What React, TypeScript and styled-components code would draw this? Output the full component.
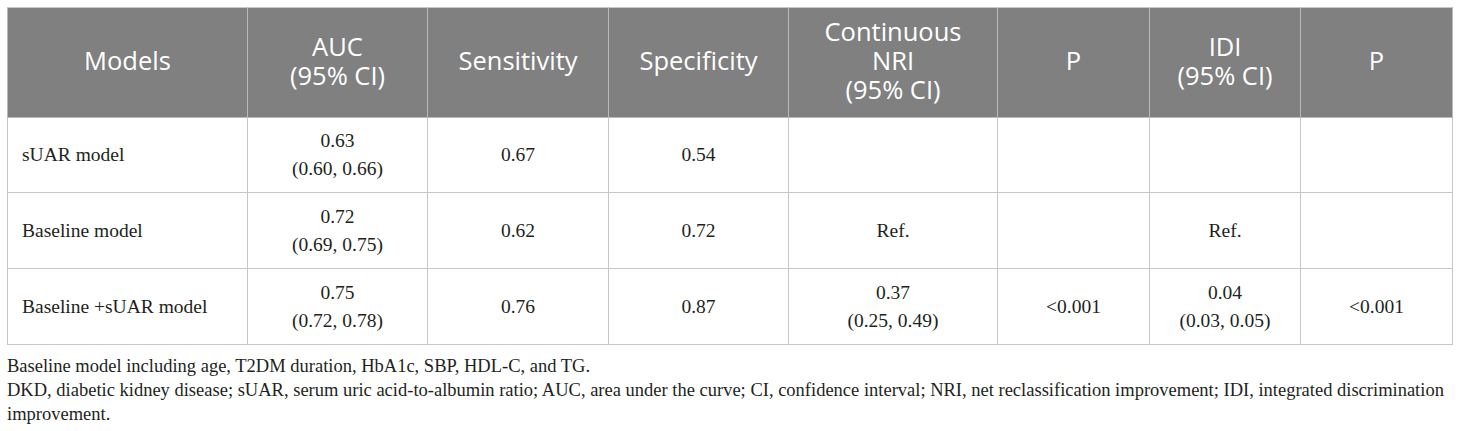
import React from "react";
import styled, { createGlobalStyle } from "styled-components";

const GlobalStyle = createGlobalStyle`
  body {
    margin: 0;
    background: #fff;
  }
`;

const columns = [240, 180, 181, 180, 209, 152, 151, 152];

const headers = [
  ["Models"],
  ["AUC", "(95% CI)"],
  ["Sensitivity"],
  ["Specificity"],
  ["Continuous", "NRI", "(95% CI)"],
  ["P"],
  ["IDI", "(95% CI)"],
  ["P"],
];

const rows: string[][][] = [
  [["sUAR model"], ["0.63", "(0.60, 0.66)"], ["0.67"], ["0.54"], [], [], [], []],
  [["Baseline model"], ["0.72", "(0.69, 0.75)"], ["0.62"], ["0.72"], ["Ref."], [], ["Ref."], []],
  [
    ["Baseline +sUAR model"],
    ["0.75", "(0.72, 0.78)"],
    ["0.76"],
    ["0.87"],
    ["0.37", "(0.25, 0.49)"],
    ["<0.001"],
    ["0.04", "(0.03, 0.05)"],
    ["<0.001"],
  ],
];

const App = () => {
  return (
    <Page>
      <GlobalStyle />
      <Table>
        <colgroup>
          {columns.map((w, i) => (
            <Col key={i} $width={w} />
          ))}
        </colgroup>
        <thead>
          <tr>
            {headers.map((lines, i) => (
              <HeadCell key={i}>
                {lines.map((l, j) => (
                  <div key={j}>{l}</div>
                ))}
              </HeadCell>
            ))}
          </tr>
        </thead>
        <tbody>
          {rows.map((row, r) => (
            <Row key={r} $height={r === 0 ? 75 : 76}>
              {row.map((lines, i) => (
                <Cell key={i} $left={i === 0}>
                  {lines.map((l, j) => (
                    <div key={j}>{l}</div>
                  ))}
                </Cell>
              ))}
            </Row>
          ))}
        </tbody>
      </Table>
      <Notes>
        <p>Baseline model including age, T2DM duration, HbA1c, SBP, HDL-C, and TG.</p>
        <p>
          DKD, diabetic kidney disease; sUAR, serum uric acid-to-albumin ratio; AUC, area under the
          curve; CI, confidence interval; NRI, net reclassification improvement; IDI, integrated
          discrimination improvement.
        </p>
      </Notes>
    </Page>
  );
};

const Page = styled.div`
  padding: 7px 8px 0 7px;
  width: 1445px;
`;

const Table = styled.table`
  width: 1445px;
  table-layout: fixed;
  border-collapse: collapse;
  border: 1px solid #c6c6c6;
`;

const Col = styled.col<{ $width: number }>`
  width: ${(p) => p.$width}px;
`;

const HeadCell = styled.th`
  box-sizing: border-box;
  height: 110px;
  padding: 0 6px 4px;
  background: #7f807f;
  color: #fff;
  font-family: "Open Sans", Lato, sans-serif;
  font-size: 25.5px;
  font-weight: 400;
  line-height: 29px;
  text-align: center;
  vertical-align: middle;
  border: 1px solid #b9b9b9;
  border-top-color: #c6c6c6;
`;

const Row = styled.tr<{ $height: number }>`
  height: ${(p) => p.$height}px;
`;

const Cell = styled.td<{ $left: boolean }>`
  padding: 0 ${(p) => (p.$left ? "14px" : "8px")};
  font-family: "Liberation Serif", "Times New Roman", serif;
  font-size: 19.5px;
  line-height: 28px;
  color: #231f20;
  text-align: ${(p) => (p.$left ? "left" : "center")};
  vertical-align: middle;
  border: 1px solid #c6c6c6;
`;

const Notes = styled.div`
  padding-top: 9px;
  font-family: "Liberation Serif", "Times New Roman", serif;
  font-size: 18.5px;
  line-height: 24px;
  color: #231f20;

  p {
    margin: 0;
  }
`;

export default App;
